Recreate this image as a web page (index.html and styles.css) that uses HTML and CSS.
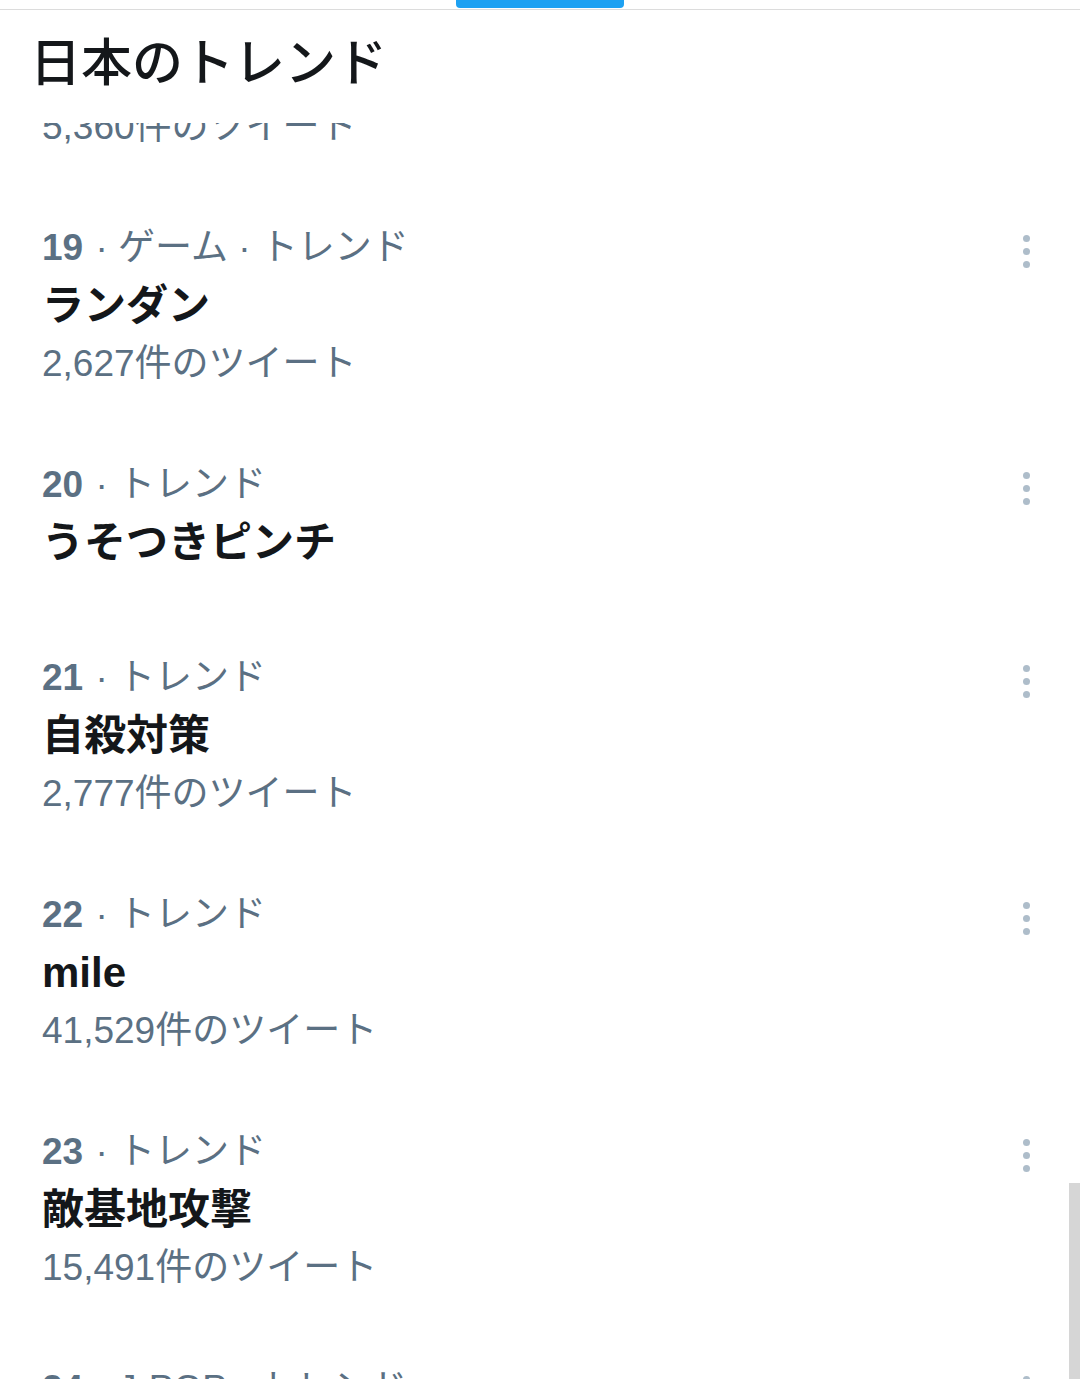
FILE: index.html
```html
<!DOCTYPE html>
<html lang="ja">

<head>
    <meta charset="UTF-8">
    <meta name="viewport" content="width=device-width, initial-scale=1.0">
    <title>日本のトレンド</title>
    <link rel="stylesheet" href="styles.css">
</head>

<body>
    <header class="top">
        <div class="tabs">
            <span class="indicator"></span>
        </div>
        <h1 class="page-title">日本のトレンド</h1>
    </header>

    <div class="feed">
        <div class="trend trend-cut">
            <div class="trend-body">
                <div class="count">5,360件のツイート</div>
            </div>
        </div>

        <div class="trend">
            <div class="trend-body">
                <div class="meta"><b>19</b> · ゲーム · トレンド</div>
                <div class="name">ランダン</div>
                <div class="count">2,627件のツイート</div>
            </div>
            <div class="more"><span></span><span></span><span></span></div>
        </div>

        <div class="trend">
            <div class="trend-body">
                <div class="meta"><b>20</b> · トレンド</div>
                <div class="name">うそつきピンチ</div>
            </div>
            <div class="more"><span></span><span></span><span></span></div>
        </div>

        <div class="trend">
            <div class="trend-body">
                <div class="meta"><b>21</b> · トレンド</div>
                <div class="name">自殺対策</div>
                <div class="count">2,777件のツイート</div>
            </div>
            <div class="more"><span></span><span></span><span></span></div>
        </div>

        <div class="trend">
            <div class="trend-body">
                <div class="meta"><b>22</b> · トレンド</div>
                <div class="name">mile</div>
                <div class="count">41,529件のツイート</div>
            </div>
            <div class="more"><span></span><span></span><span></span></div>
        </div>

        <div class="trend">
            <div class="trend-body">
                <div class="meta"><b>23</b> · トレンド</div>
                <div class="name">敵基地攻撃</div>
                <div class="count">15,491件のツイート</div>
            </div>
            <div class="more"><span></span><span></span><span></span></div>
        </div>

        <div class="trend">
            <div class="trend-body">
                <div class="meta"><b>24</b> · J-POP · トレンド</div>
                <div class="name">&nbsp;</div>
            </div>
            <div class="more"><span></span><span></span><span></span></div>
        </div>
    </div>

    <div class="scroll-thumb"></div>
</body>

</html>
```

FILE: styles.css
```css
body {
    font-family: "Liberation Sans", "Noto Sans CJK JP", sans-serif;
    background: #fff;
    color: #14171a;
    margin: 0;
    padding: 0;
    height: 1379px;
    overflow: hidden;
}

.top {
    background: #fff;
}

.tabs {
    height: 9px;
    border-bottom: 1px solid #dcdcdc;
    display: flex;
    justify-content: center;
}

.indicator {
    width: 168px;
    height: 8px;
    background: #1da1f2;
    border-radius: 0 0 4px 4px;
}

.page-title {
    margin: 0;
    padding: 24px 0 0 30px;
    height: 113px;
    box-sizing: border-box;
    font-size: 51px;
    line-height: 60px;
    font-weight: 500;
    color: #14171a;
}

.feed {
    overflow: hidden;
}

.trend {
    display: flex;
    align-items: flex-start;
    padding: 30px 50px 33px 42px;
    min-height: 193px;
    box-sizing: border-box;
}

.trend-cut {
    min-height: 0;
    padding-top: 0;
    margin-top: -25px;
}

.trend-body {
    flex: 1;
}

.meta,
.count {
    font-size: 37px;
    line-height: 58px;
    color: #5b7083;
}

.meta b {
    font-weight: 700;
    margin-right: 2px;
}

.name {
    font-size: 42px;
    line-height: 58px;
    font-weight: 700;
    color: #14171a;
}

.more {
    display: flex;
    flex-direction: column;
    gap: 6px;
    margin-top: 16px;
}

.more span {
    width: 7px;
    height: 7px;
    border-radius: 50%;
    background: #aebdca;
}

.scroll-thumb {
    position: fixed;
    right: 0;
    top: 1183px;
    width: 11px;
    height: 196px;
    background: #d6d6d6;
}
```
